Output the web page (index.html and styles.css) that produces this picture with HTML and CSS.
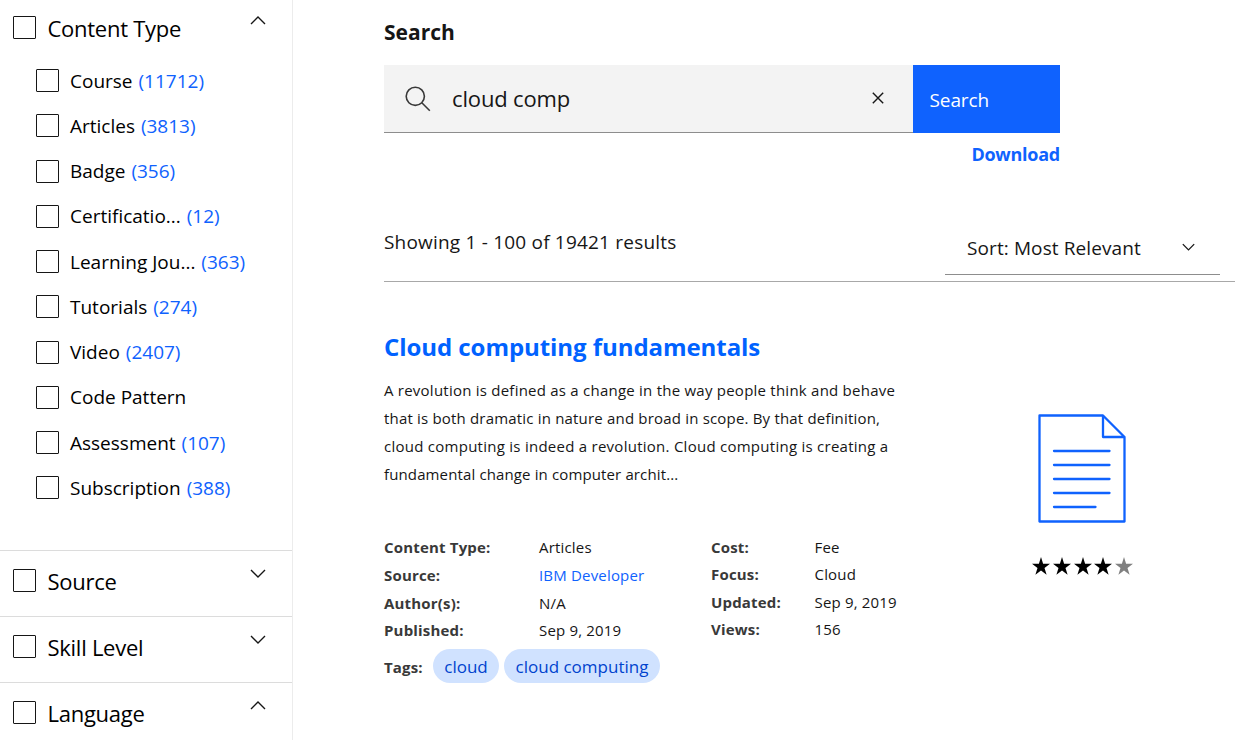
FILE: index.html
```html
<!DOCTYPE html>
<html lang="en">
<head>
<meta charset="utf-8">
<title>Search</title>
<link rel="stylesheet" href="styles.css">
</head>
<body>
<svg class="defs" width="0" height="0">
  <symbol id="chev-down" viewBox="0 0 16 9"><path d="M1 1l7 7 7-7"/></symbol>
  <symbol id="chev-up" viewBox="0 0 16 9"><path d="M1 8l7-7 7 7"/></symbol>
  <symbol id="star" viewBox="0 0 18 18"><path d="M9 0l2.1 6.7H18l-5.5 4.2 2.1 6.8L9 13.5l-5.600 4.200 2.100-6.800L0 6.700h6.900z"/></symbol>
</svg>
<div class="page">
  <aside class="sidebar">
    <section class="facet facet-open">
      <div class="facet-head"><span class="box"></span><span class="facet-name">Content Type</span><svg class="chev"><use href="#chev-up"/></svg></div>
      <ul class="options">
        <li><span class="box"></span><span>Course <b>(11712)</b></span></li>
        <li><span class="box"></span><span>Articles <b>(3813)</b></span></li>
        <li><span class="box"></span><span>Badge <b>(356)</b></span></li>
        <li><span class="box"></span><span>Certificatio... <b>(12)</b></span></li>
        <li><span class="box"></span><span>Learning Jou... <b>(363)</b></span></li>
        <li><span class="box"></span><span>Tutorials <b>(274)</b></span></li>
        <li><span class="box"></span><span>Video <b>(2407)</b></span></li>
        <li><span class="box"></span><span>Code Pattern</span></li>
        <li><span class="box"></span><span>Assessment <b>(107)</b></span></li>
        <li><span class="box"></span><span>Subscription <b>(388)</b></span></li>
      </ul>
    </section>
    <section class="facet"><div class="facet-head"><span class="box"></span><span class="facet-name">Source</span><svg class="chev"><use href="#chev-down"/></svg></div></section>
    <section class="facet"><div class="facet-head"><span class="box"></span><span class="facet-name">Skill Level</span><svg class="chev"><use href="#chev-down"/></svg></div></section>
    <section class="facet"><div class="facet-head"><span class="box"></span><span class="facet-name">Language</span><svg class="chev"><use href="#chev-up"/></svg></div></section>
  </aside>
  <main class="main">
    <h1 class="heading">Search</h1>
    <div class="searchbar">
      <div class="field">
        <svg class="lens" viewBox="0 0 26 26"><circle cx="10.300" cy="10.300" r="9.100"/><path d="M16.800 16.800l8 8"/></svg>
        <span class="query">cloud comp</span>
        <svg class="clear" viewBox="0 0 12 12"><path d="M.8.8l10.400 10.400M11.200.8L.8 11.200"/></svg>
      </div>
      <button class="go">Search</button>
    </div>
    <a class="download">Download</a>
    <div class="results-bar">
      <span class="count">Showing 1 - 100 of 19421 results</span>
      <div class="sort"><span>Sort: Most Relevant</span><svg class="chev-small"><use href="#chev-down"/></svg></div>
    </div>
    <article class="result">
      <div class="result-body">
        <h2 class="title">Cloud computing fundamentals</h2>
        <p class="summary">A revolution is defined as a change in the way people think and behave<br><span class="snug">that is both dramatic in nature and broad in scope. By that definition,</span><br><span class="loose">cloud computing is indeed a revolution. Cloud computing is creating a</span><br><span class="tight">fundamental change in computer archit...</span></p>
        <div class="meta">
          <dl class="meta-a"><dt>Content Type:</dt><dd>Articles</dd><dt>Source:</dt><dd><a>IBM Developer</a></dd><dt>Author(s):</dt><dd>N/A</dd><dt>Published:</dt><dd>Sep 9, 2019</dd></dl>
          <dl class="meta-b"><dt>Cost:</dt><dd>Fee</dd><dt>Focus:</dt><dd>Cloud</dd><dt>Updated:</dt><dd>Sep 9, 2019</dd><dt>Views:</dt><dd>156</dd></dl>
        </div>
        <div class="tags"><span class="tags-label">Tags:</span><span class="tag tag-1">cloud</span><span class="tag tag-2">cloud computing</span></div>
      </div>
      <div class="result-side">
        <svg class="doc" viewBox="0 0 88 109"><path d="M1.500 1.500h63.500l21.500 21.500v84.500h-85zM65 1.500v21.500h21.500"/><path class="rules" d="M16 37h55.500M16 51h55.500M16 65h55.500M16 79h55.500M16 93h41.500"/></svg>
        <div class="stars"><svg><use href="#star"/></svg><svg><use href="#star"/></svg><svg><use href="#star"/></svg><svg><use href="#star"/></svg><svg class="off"><use href="#star"/></svg></div>
      </div>
    </article>
  </main>
</div>
</body>
</html>
```
FILE: styles.css
```css
* { box-sizing: border-box; }
body { margin: 0; background: #fff; color: #161616; font-family: "Open Sans", "Noto Sans", sans-serif; overflow: hidden; }
ul, dl, dd, h1, h2, p { margin: 0; padding: 0; }
.defs { position: absolute; }
.page { display: flex; height: 740px; }
svg { fill: none; flex: none; }

.sidebar { width: 293px; height: 740px; overflow: hidden; border-right: 1px solid #ececec; color: #000; flex: none; }
.facet { height: 66px; border-top: 1px solid #dcdcdc; padding: 18px 0 0 13px; }
.facet-open { height: 550px; border-top: 0; padding-top: 16px; }
.facet-head { display: flex; align-items: flex-start; height: 23px; }
.box { width: 23px; height: 23px; border: 1px solid #161616; border-radius: 1px; flex: none; }
.facet-name { flex: 1; margin-left: 11.5px; font-size: 22px; line-height: 25px; letter-spacing: -.27px; }
.chev { width: 16px; height: 9px; margin-right: 26px; stroke: #161616; stroke-width: 1.4; }
.options { list-style: none; padding: 19px 0 0 23px; }
.options li { display: flex; align-items: center; gap: 11px; height: 45.25px; font-size: 19px; white-space: nowrap; }
.options b { font-weight: 400; color: #0f62fe; margin-left: 1px; }

.main { flex: 1; min-width: 0; padding: 17px 0 0 91px; }
.heading { font-size: 21px; line-height: 30px; height: 48px; }
.searchbar { display: flex; width: 676px; height: 68px; }
.field { flex: 1; display: flex; align-items: center; padding: 0 29px 0 21px; background: #f3f3f3; border-bottom: 1px solid #8d8d8d; }
.lens { width: 26px; height: 26px; stroke: #393939; stroke-width: 1.6; }
.query { flex: 1; margin-left: 21px; padding-bottom: 2px; font-size: 22px; letter-spacing: -.15px; }
.clear { width: 12px; height: 12px; margin-bottom: 1px; stroke: #161616; stroke-width: 1.4; }
.go { width: 147px; border: 0; padding: 2px 0 0 16.500px; background: #0f62fe; color: #fff; font: 19px "Open Sans", "Noto Sans", sans-serif; letter-spacing: -.1px; text-align: left; }
.download { display: block; width: 676px; height: 81px; padding-top: 7px; text-align: right; color: #0f62fe; font-size: 18px; line-height: 28px; font-weight: 700; letter-spacing: -.25px; }
.results-bar { display: flex; justify-content: space-between; height: 68px; border-bottom: 1px solid #a8a8a8; padding-right: 15px; }
.count { font-size: 19px; line-height: 28px; margin-top: 14px; letter-spacing: .2px; }
.sort { display: flex; align-items: center; justify-content: space-between; width: 275px; height: 54px; margin-top: 7px; padding: 0 25.500px 0 22px; border-bottom: 1px solid #8d8d8d; font-size: 19px; letter-spacing: .1px; }
.chev-small { width: 13px; height: 8px; margin-bottom: 1px; stroke: #161616; stroke-width: 1.6; }

.result { display: flex; padding-top: 44px; }
.result-body { width: 654px; flex: none; padding-top: 1px; }
.title { font-size: 24px; line-height: 40px; color: #0062ff; letter-spacing: -.06px; white-space: nowrap; }
.summary { margin-top: 9px; font-size: 15px; line-height: 28px; letter-spacing: .235px; white-space: nowrap; }
.snug { letter-spacing: .185px; }
.loose { letter-spacing: .26px; }
.tight { letter-spacing: .13px; }
.meta { display: flex; height: 111px; margin-top: 46px; font-size: 15px; letter-spacing: .18px; white-space: nowrap; }
.meta dl { display: grid; align-content: start; }
.meta-a { width: 327px; grid-template-columns: 155px 1fr; grid-auto-rows: 27.75px; line-height: 27.75px; }
.meta-b { grid-template-columns: 103.500px 1fr; grid-auto-rows: 27.400px; line-height: 27.750px; }
dt, .tags-label { font-weight: 700; color: #393939; font-size: 15px; }
.meta a { color: #0f62fe; }
.tags { display: flex; align-items: center; height: 34px; margin-top: 4px; }
.tags-label { width: 49px; padding-top: 2px; letter-spacing: .15px; }
.tag { height: 34px; line-height: 36px; border-radius: 17px; background: #d0e2ff; color: #0043ce; font-size: 17px; text-align: center; white-space: nowrap; }
.tag-1 { width: 66px; margin-right: 5px; }
.tag-2 { width: 156px; }

.result-side { padding-top: 88px; }
.doc { display: block; width: 88px; height: 109px; margin-left: 0; stroke: #0f62fe; stroke-width: 2.3; stroke-linejoin: round; }
.rules { stroke-linecap: round; }
.stars { display: flex; gap: 2.800px; margin: 34px 0 0 -6px; }
.stars svg { width: 18px; height: 18px; fill: #000; }
.stars .off { fill: #808080; }
```
